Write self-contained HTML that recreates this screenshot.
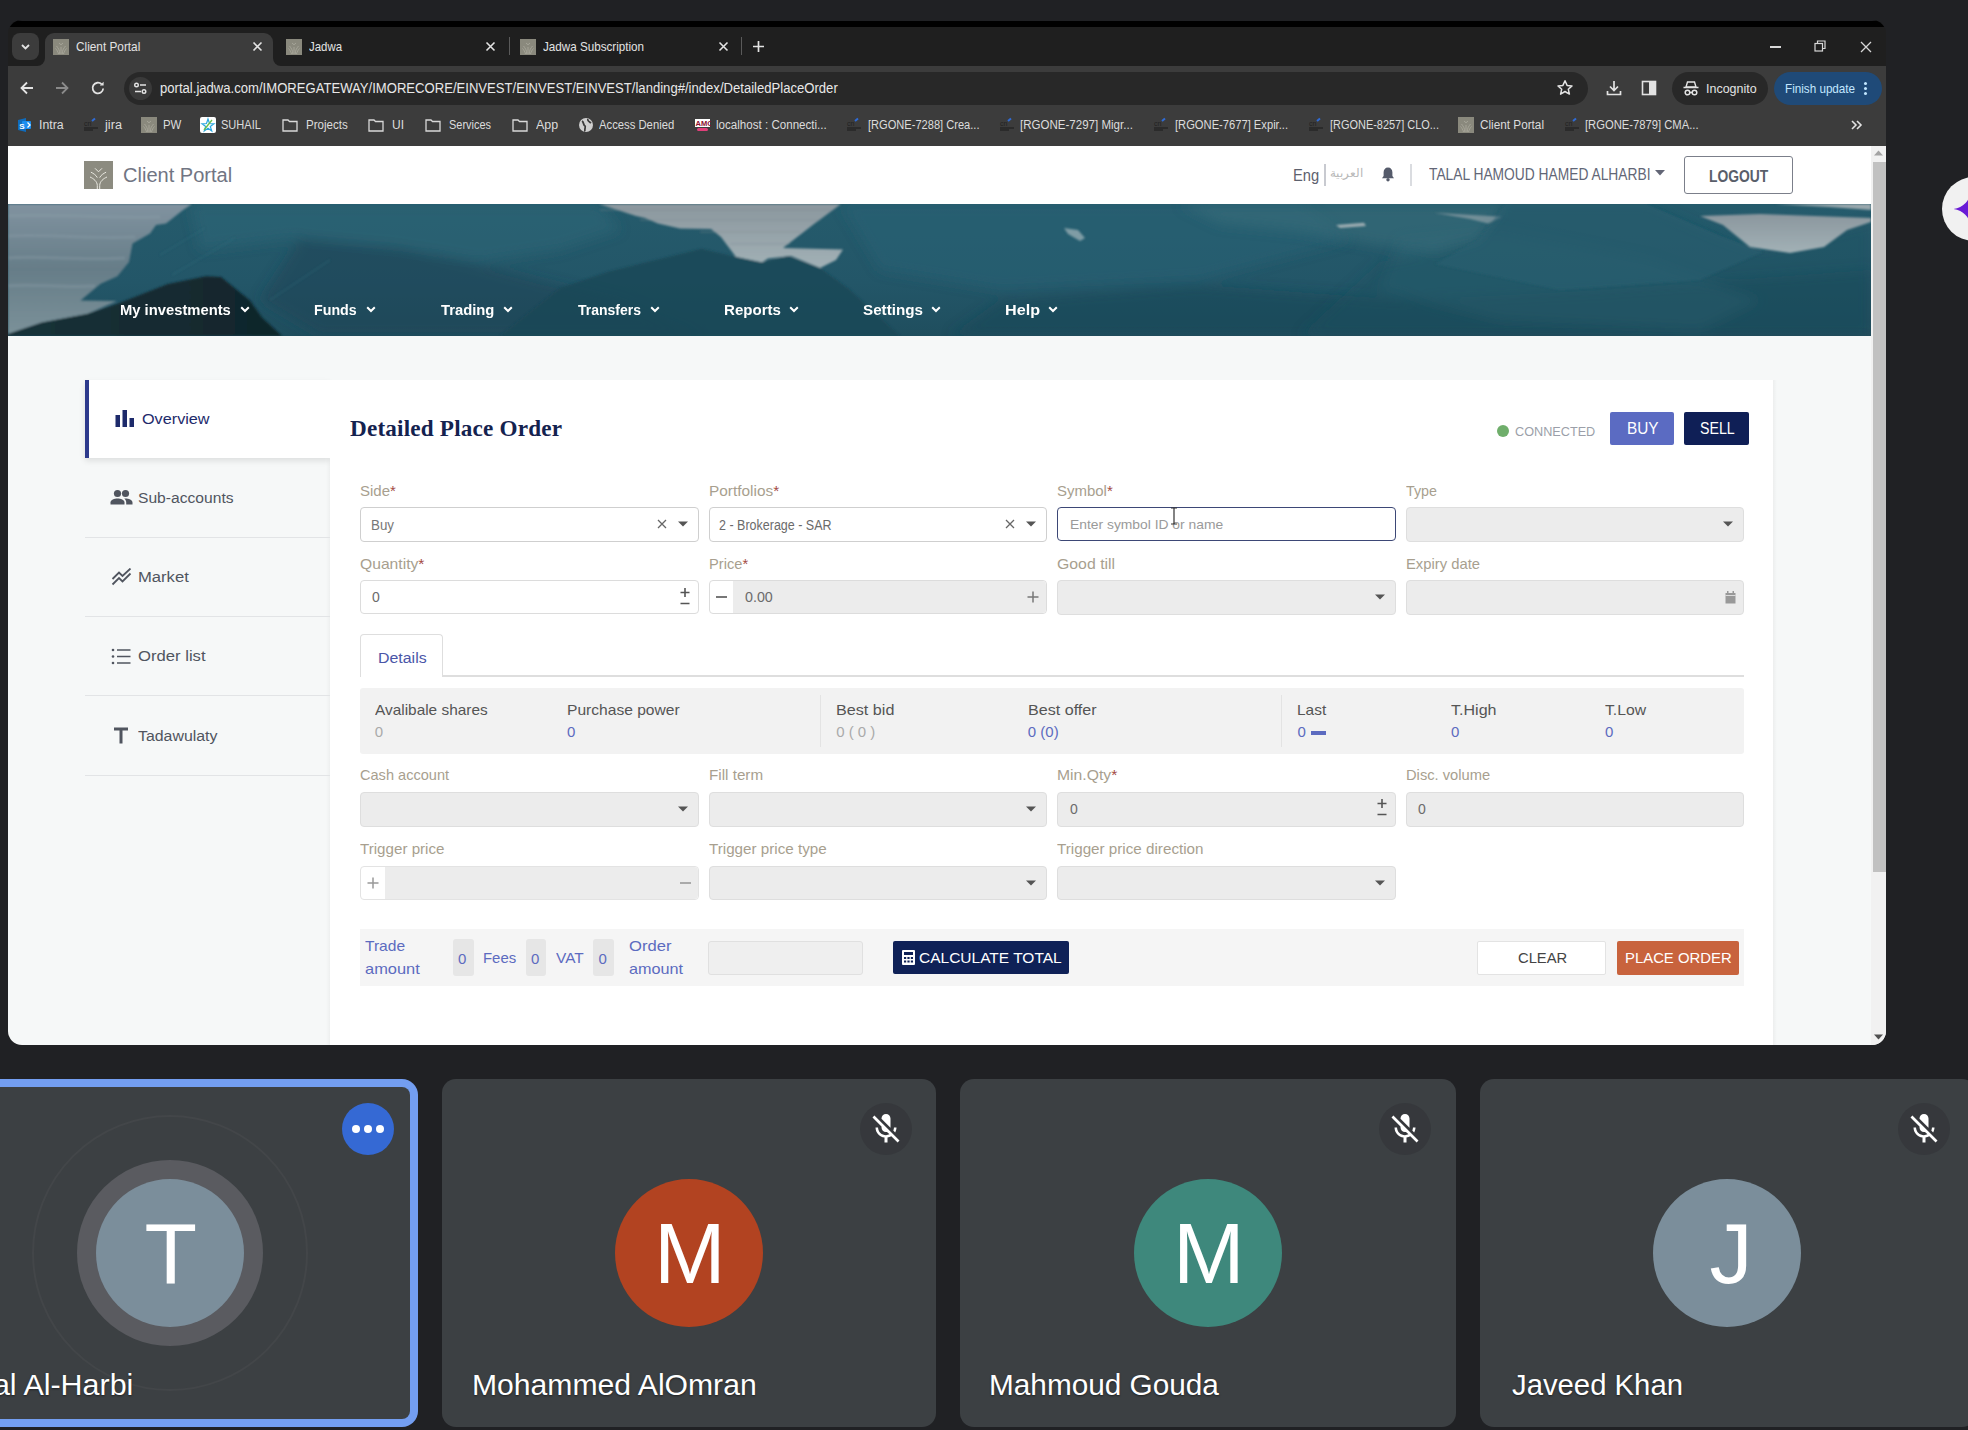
<!DOCTYPE html>
<html><head><meta charset="utf-8">
<style>
*{margin:0;padding:0;box-sizing:border-box}
html,body{width:1968px;height:1430px;overflow:hidden;background:#202124;font-family:"Liberation Sans",sans-serif}
.a{position:absolute}
.t{position:absolute;white-space:nowrap;line-height:1}
/* browser chrome */
#win{position:absolute;left:8px;top:20px;width:1878px;height:1025px;border-radius:14px;overflow:hidden;background:#1f1f1f}
.ct{color:#e3e3e3;font-size:13px}
.bk{color:#dcdcdc;font-size:12.5px}
.lb{position:absolute;white-space:nowrap;line-height:1;font-size:14.5px;color:#a89f8f}
.av{font-size:86px;color:#fff}
.nm{font-size:29px;color:#fff;text-shadow:0 1px 2px rgba(0,0,0,.5)}
.nv{font-size:15.5px;color:#fff;font-weight:bold}
.fav{position:absolute;width:16px;height:16px;background:#8b8879}
</style></head>
<body>
<div id="win">
  <div class="a" style="left:0;top:0;width:1878px;height:7px;background:#000;border-radius:14px 14px 0 0"></div><div class="a" style="left:0;top:0;width:1878px;height:1px;background:#202124"></div>
  <!-- tab strip -->
  <div class="a" style="left:4px;top:13px;width:27px;height:27px;border-radius:8px;background:#3c3c3c"></div>
  <svg class="a" style="left:11px;top:20px" width="13" height="13" viewBox="0 0 13 13"><path d="M3 5 L6.5 8.5 L10 5" stroke="#e3e3e3" stroke-width="1.8" fill="none"/></svg>
  <div class="a" style="left:37px;top:13px;width:228px;height:40px;border-radius:9px 9px 0 0;background:#3c3c3c"></div>
  <div class="a" style="left:29px;top:38px;width:8px;height:8px;background:#3c3c3c"></div><div class="a" style="left:29px;top:38px;width:8px;height:8px;background:#1f1f1f;border-bottom-right-radius:8px"></div>
  <div class="a" style="left:265px;top:38px;width:8px;height:8px;background:#3c3c3c"></div><div class="a" style="left:265px;top:38px;width:8px;height:8px;background:#1f1f1f;border-bottom-left-radius:8px"></div>
  <svg class="a" style="left:45px;top:19px" width="16" height="16" viewBox="0 0 16 16"><rect width="16" height="16" fill="#8a897d"/><path d="M8 15V8M6.8 15C6.8 11 5 9 3.5 7M9.2 15C9.2 11 11 9 12.5 7M5.5 15C5 12.5 3.5 10.5 2.5 9.5M10.5 15C11 12.5 12.5 10.5 13.5 9.5M6 4L8 5.8L10 4" stroke="#a9a89c" stroke-width="0.9" fill="none"/></svg>
  <div class="t ct" style="transform:scaleX(0.908);transform-origin:0 0;left:68px;top:20px">Client Portal</div>
  <svg class="a" style="left:244px;top:21px" width="11" height="11" viewBox="0 0 11 11"><path d="M1.5 1.5L9.5 9.5M9.5 1.5L1.5 9.5" stroke="#e3e3e3" stroke-width="1.6"/></svg>
  <svg class="a" style="left:278px;top:19px" width="16" height="16" viewBox="0 0 16 16"><rect width="16" height="16" fill="#8a897d"/><path d="M8 15V8M6.8 15C6.8 11 5 9 3.5 7M9.2 15C9.2 11 11 9 12.5 7M5.5 15C5 12.5 3.5 10.5 2.5 9.5M10.5 15C11 12.5 12.5 10.5 13.5 9.5M6 4L8 5.8L10 4" stroke="#a9a89c" stroke-width="0.9" fill="none"/></svg>
  <div class="t ct" style="transform:scaleX(0.878);transform-origin:0 0;left:301px;top:20px">Jadwa</div>
  <svg class="a" style="left:477px;top:21px" width="11" height="11" viewBox="0 0 11 11"><path d="M1.5 1.5L9.5 9.5M9.5 1.5L1.5 9.5" stroke="#e3e3e3" stroke-width="1.6"/></svg>
  <div class="a" style="left:501px;top:17px;width:1px;height:18px;background:#5a5a5a"></div>
  <svg class="a" style="left:512px;top:19px" width="16" height="16" viewBox="0 0 16 16"><rect width="16" height="16" fill="#8a897d"/><path d="M8 15V8M6.8 15C6.8 11 5 9 3.5 7M9.2 15C9.2 11 11 9 12.5 7M5.5 15C5 12.5 3.5 10.5 2.5 9.5M10.5 15C11 12.5 12.5 10.5 13.5 9.5M6 4L8 5.8L10 4" stroke="#a9a89c" stroke-width="0.9" fill="none"/></svg>
  <div class="t ct" style="transform:scaleX(0.896);transform-origin:0 0;left:535px;top:20px">Jadwa Subscription</div>
  <svg class="a" style="left:710px;top:21px" width="11" height="11" viewBox="0 0 11 11"><path d="M1.5 1.5L9.5 9.5M9.5 1.5L1.5 9.5" stroke="#e3e3e3" stroke-width="1.6"/></svg>
  <div class="a" style="left:733px;top:17px;width:1px;height:18px;background:#5a5a5a"></div>
  <svg class="a" style="left:744px;top:20px" width="13" height="13" viewBox="0 0 13 13"><path d="M6.5 1V12M1 6.5H12" stroke="#e3e3e3" stroke-width="1.7"/></svg>
  <!-- window controls -->
  <div class="a" style="left:1762px;top:26px;width:11px;height:1.5px;background:#d8d8d8"></div>
  <svg class="a" style="left:1806px;top:20px" width="12" height="12" viewBox="0 0 12 12"><rect x="1" y="3.5" width="7.5" height="7.5" fill="none" stroke="#d8d8d8" stroke-width="1.2"/><path d="M3.5 3.5V1H11V8.5H8.5" fill="none" stroke="#d8d8d8" stroke-width="1.2"/></svg>
  <svg class="a" style="left:1852px;top:21px" width="12" height="12" viewBox="0 0 12 12"><path d="M1 1L11 11M11 1L1 11" stroke="#d8d8d8" stroke-width="1.3"/></svg>

  <!-- toolbar -->
  <div class="a" style="left:0;top:46px;width:1878px;height:80px;background:#3c3c3c"></div>
  <svg class="a" style="left:11px;top:60px" width="16" height="16" viewBox="0 0 16 16"><path d="M14 8H2.5M8 2.5L2.5 8L8 13.5" stroke="#e3e3e3" stroke-width="1.8" fill="none"/></svg>
  <svg class="a" style="left:46px;top:60px" width="16" height="16" viewBox="0 0 16 16"><path d="M2 8H13.5M8 2.5L13.5 8L8 13.5" stroke="#8a8a8a" stroke-width="1.8" fill="none"/></svg>
  <svg class="a" style="left:82px;top:60px" width="16" height="16" viewBox="0 0 16 16"><path d="M13.2 8.5A5.3 5.3 0 1 1 11.6 4.2" stroke="#e3e3e3" stroke-width="1.8" fill="none"/><path d="M13.6 1.8V5.6H9.8Z" fill="#e3e3e3"/></svg>
  <div class="a" style="left:116px;top:52px;width:1464px;height:33px;border-radius:17px;background:#282828"></div>
  <div class="a" style="left:121px;top:57px;width:23px;height:23px;border-radius:12px;background:#3a3a3a"></div>
  <svg class="a" style="left:124px;top:60px" width="17" height="17" viewBox="0 0 17 17"><circle cx="4.5" cy="5" r="1.8" fill="none" stroke="#e3e3e3" stroke-width="1.4"/><path d="M8 5H14" stroke="#e3e3e3" stroke-width="1.6"/><circle cx="12" cy="11.5" r="1.8" fill="none" stroke="#e3e3e3" stroke-width="1.4"/><path d="M3 11.5H9" stroke="#e3e3e3" stroke-width="1.6"/></svg>
  <div class="t" style="transform:scaleX(0.935);transform-origin:0 0;left:152px;top:61px;color:#e8e8e8;font-size:14px" id="url">portal.jadwa.com/IMOREGATEWAY/IMORECORE/EINVEST/EINVEST/EINVEST/landing#/index/DetailedPlaceOrder</div>
  <svg class="a" style="left:1548px;top:59px" width="18" height="18" viewBox="0 0 18 18"><path d="M9 1.8L11.1 6.4L16 6.9L12.3 10.2L13.4 15.1L9 12.5L4.6 15.1L5.7 10.2L2 6.9L6.9 6.4Z" fill="none" stroke="#e3e3e3" stroke-width="1.5" stroke-linejoin="round"/></svg>
  <svg class="a" style="left:1597px;top:59px" width="18" height="18" viewBox="0 0 18 18"><path d="M9 2V11M5 7.5L9 11.5L13 7.5M2.5 12V15.5H15.5V12" stroke="#e3e3e3" stroke-width="1.7" fill="none"/></svg>
  <svg class="a" style="left:1633px;top:60px" width="16" height="16" viewBox="0 0 16 16"><rect x="1.5" y="1.5" width="13" height="13" fill="none" stroke="#e3e3e3" stroke-width="1.6"/><rect x="8" y="1.5" width="6.5" height="13" fill="#e3e3e3"/></svg>
  <div class="a" style="left:1664px;top:52px;width:96px;height:33px;border-radius:17px;background:#282828"></div>
  <svg class="a" style="left:1674px;top:60px" width="18" height="18" viewBox="0 0 18 18"><path d="M4 7L5.5 2H12.5L14 7Z" fill="none" stroke="#e3e3e3" stroke-width="1.4"/><path d="M1.5 7.5H16.5" stroke="#e3e3e3" stroke-width="1.6"/><circle cx="5.5" cy="12.5" r="2.3" fill="none" stroke="#e3e3e3" stroke-width="1.5"/><circle cx="12.5" cy="12.5" r="2.3" fill="none" stroke="#e3e3e3" stroke-width="1.5"/><path d="M7.8 12.5H10.2" stroke="#e3e3e3" stroke-width="1.3"/></svg>
  <div class="t" style="transform:scaleX(0.959);transform-origin:0 0;left:1698px;top:62px;color:#e3e3e3;font-size:13px">Incognito</div>
  <div class="a" style="left:1766px;top:52px;width:108px;height:33px;border-radius:17px;background:#1f4a78"></div>
  <div class="t" style="transform:scaleX(0.898);transform-origin:0 0;left:1777px;top:62px;color:#c2e7ff;font-size:13px">Finish update</div>
  <div class="a" style="left:1856px;top:62px;width:3px;height:3px;border-radius:2px;background:#c2e7ff"></div>
  <div class="a" style="left:1856px;top:67px;width:3px;height:3px;border-radius:2px;background:#c2e7ff"></div>
  <div class="a" style="left:1856px;top:72px;width:3px;height:3px;border-radius:2px;background:#c2e7ff"></div>

  <!-- bookmarks -->
  
  <!-- bookmarks (internal coords) -->
  <svg class="a" style="left:9px;top:97px" width="16" height="16" viewBox="0 0 16 16"><path d="M1 3L9 1V15L1 13Z" fill="#0f6cbd"/><rect x="5" y="4" width="9" height="8" rx="1" fill="#1b8ff0"/><text x="2.2" y="11.5" font-size="8" font-weight="bold" fill="#fff" font-family="Liberation Sans">S</text><path d="M10.5 5.5L13 8L10.5 10.5" stroke="#fff" stroke-width="1.3" fill="none"/></svg>
  <div class="t bk" style="transform:scaleX(0.983);transform-origin:0 0;left:31px;top:99px">Intra</div>
  <svg class="a jr" style="left:75px;top:97px" width="16" height="16" viewBox="0 0 16 16"><text x="1" y="9" font-size="7" fill="#222" font-family="Liberation Sans">cn</text><path d="M9 4L12 1.5" stroke="#2f6bd6" stroke-width="2"/><path d="M1 11H15M1 13H10" stroke="#1a1a1a" stroke-width="1"/></svg>
  <div class="t bk" style="transform:scaleX(1.020);transform-origin:0 0;left:97px;top:99px">jira</div>
  <svg class="a" style="left:133px;top:97px" width="16" height="16" viewBox="0 0 16 16"><rect width="16" height="16" fill="#8a897d"/><path d="M8 15V8M6.8 15C6.8 11 5 9 3.5 7M9.2 15C9.2 11 11 9 12.5 7M5.5 15C5 12.5 3.5 10.5 2.5 9.5M10.5 15C11 12.5 12.5 10.5 13.5 9.5M6 4L8 5.8L10 4" stroke="#a9a89c" stroke-width="0.9" fill="none"/></svg>
  <div class="t bk" style="transform:scaleX(0.914);transform-origin:0 0;left:155px;top:99px">PW</div>
  <svg class="a" style="left:192px;top:97px" width="16" height="16" viewBox="0 0 16 16"><rect width="16" height="16" rx="2" fill="#fff"/><path d="M8 2L9.5 6.5L14 6.8L10.3 9.5L11.7 14L8 11.2L4.3 14L5.7 9.5L2 6.8L6.5 6.5Z" fill="none" stroke="#2da8e0" stroke-width="1.2"/><path d="M4 13L12 3" stroke="#6cc04a" stroke-width="1.3"/></svg>
  <div class="t bk" style="transform:scaleX(0.884);transform-origin:0 0;left:213px;top:99px">SUHAIL</div>
  <svg class="a fd" style="left:274px;top:98px" width="16" height="14" viewBox="0 0 16 14"><path d="M1 2H6L7.5 3.5H15V13H1Z" fill="none" stroke="#d8d8d8" stroke-width="1.3"/></svg>
  <div class="t bk" style="transform:scaleX(0.926);transform-origin:0 0;left:298px;top:99px">Projects</div>
  <svg class="a" style="left:360px;top:98px" width="16" height="14" viewBox="0 0 16 14"><path d="M1 2H6L7.5 3.5H15V13H1Z" fill="none" stroke="#d8d8d8" stroke-width="1.3"/></svg>
  <div class="t bk" style="transform:scaleX(0.960);transform-origin:0 0;left:384px;top:99px">UI</div>
  <svg class="a" style="left:417px;top:98px" width="16" height="14" viewBox="0 0 16 14"><path d="M1 2H6L7.5 3.5H15V13H1Z" fill="none" stroke="#d8d8d8" stroke-width="1.3"/></svg>
  <div class="t bk" style="transform:scaleX(0.876);transform-origin:0 0;left:441px;top:99px">Services</div>
  <svg class="a" style="left:504px;top:98px" width="16" height="14" viewBox="0 0 16 14"><path d="M1 2H6L7.5 3.5H15V13H1Z" fill="none" stroke="#d8d8d8" stroke-width="1.3"/></svg>
  <div class="t bk" style="transform:scaleX(0.993);transform-origin:0 0;left:528px;top:99px">App</div>
  <svg class="a" style="left:570px;top:97px" width="16" height="16" viewBox="0 0 16 16"><circle cx="8" cy="8" r="7" fill="#cfcfcf"/><path d="M4 4C6 5 5 8 7 9C8 10 6 13 7 14.5M10 2C9 4 12 5 13 6" stroke="#3c3c3c" stroke-width="1.8" fill="none"/></svg>
  <div class="t bk" style="transform:scaleX(0.902);transform-origin:0 0;left:591px;top:99px">Access Denied</div>
  <svg class="a" style="left:686px;top:97px" width="17" height="16" viewBox="0 0 17 16"><rect x="1" y="2" width="15" height="8" fill="#fff"/><text x="1.5" y="9" font-size="7.5" font-weight="bold" fill="#8a1030" font-family="Liberation Sans">AMO</text><rect x="3" y="11" width="11" height="3" rx="1.5" fill="#e0407a"/></svg>
  <div class="t bk" style="transform:scaleX(0.927);transform-origin:0 0;left:708px;top:99px">localhost : Connecti...</div>
  <svg class="a" style="left:838px;top:97px" width="16" height="16" viewBox="0 0 16 16"><text x="1" y="9" font-size="7" fill="#222" font-family="Liberation Sans">cn</text><path d="M9 4L12 1.5" stroke="#2f6bd6" stroke-width="2"/><path d="M1 11H15M1 13H10" stroke="#1a1a1a" stroke-width="1"/></svg>
  <div class="t bk" style="transform:scaleX(0.887);transform-origin:0 0;left:860px;top:99px">[RGONE-7288] Crea...</div>
  <svg class="a" style="left:991px;top:97px" width="16" height="16" viewBox="0 0 16 16"><text x="1" y="9" font-size="7" fill="#222" font-family="Liberation Sans">cn</text><path d="M9 4L12 1.5" stroke="#2f6bd6" stroke-width="2"/><path d="M1 11H15M1 13H10" stroke="#1a1a1a" stroke-width="1"/></svg>
  <div class="t bk" style="transform:scaleX(0.923);transform-origin:0 0;left:1012px;top:99px">[RGONE-7297] Migr...</div>
  <svg class="a" style="left:1145px;top:97px" width="16" height="16" viewBox="0 0 16 16"><text x="1" y="9" font-size="7" fill="#222" font-family="Liberation Sans">cn</text><path d="M9 4L12 1.5" stroke="#2f6bd6" stroke-width="2"/><path d="M1 11H15M1 13H10" stroke="#1a1a1a" stroke-width="1"/></svg>
  <div class="t bk" style="transform:scaleX(0.894);transform-origin:0 0;left:1167px;top:99px">[RGONE-7677] Expir...</div>
  <svg class="a" style="left:1300px;top:97px" width="16" height="16" viewBox="0 0 16 16"><text x="1" y="9" font-size="7" fill="#222" font-family="Liberation Sans">cn</text><path d="M9 4L12 1.5" stroke="#2f6bd6" stroke-width="2"/><path d="M1 11H15M1 13H10" stroke="#1a1a1a" stroke-width="1"/></svg>
  <div class="t bk" style="transform:scaleX(0.876);transform-origin:0 0;left:1322px;top:99px">[RGONE-8257] CLO...</div>
  <svg class="a" style="left:1450px;top:97px" width="16" height="16" viewBox="0 0 16 16"><rect width="16" height="16" fill="#8a897d"/><path d="M8 15V8M6.8 15C6.8 11 5 9 3.5 7M9.2 15C9.2 11 11 9 12.5 7M5.5 15C5 12.5 3.5 10.5 2.5 9.5M10.5 15C11 12.5 12.5 10.5 13.5 9.5M6 4L8 5.8L10 4" stroke="#a9a89c" stroke-width="0.9" fill="none"/></svg>
  <div class="t bk" style="transform:scaleX(0.940);transform-origin:0 0;left:1472px;top:99px">Client Portal</div>
  <svg class="a" style="left:1556px;top:97px" width="16" height="16" viewBox="0 0 16 16"><text x="1" y="9" font-size="7" fill="#222" font-family="Liberation Sans">cn</text><path d="M9 4L12 1.5" stroke="#2f6bd6" stroke-width="2"/><path d="M1 11H15M1 13H10" stroke="#1a1a1a" stroke-width="1"/></svg>
  <div class="t bk" style="transform:scaleX(0.898);transform-origin:0 0;left:1577px;top:99px">[RGONE-7879] CMA...</div>
  <svg class="a" style="left:1842px;top:99px" width="13" height="12" viewBox="0 0 13 12"><path d="M2 2L6 6L2 10M7 2L11 6L7 10" stroke="#e3e3e3" stroke-width="1.6" fill="none"/></svg>

</div>

<div id="page" class="a" style="left:8px;top:146px;width:1878px;height:899px;overflow:hidden;border-radius:0 0 14px 14px;background:#f6f8f8">
<div class="a" style="left:-8px;top:-146px;width:1968px;height:1430px">
  <!-- header -->
  <div class="a" style="left:8px;top:146px;width:1863px;height:58px;background:#fff"></div>
  <svg class="a" style="left:84px;top:161px" width="29" height="28" viewBox="0 0 29 28"><rect width="29" height="28" fill="#8c8b80"/><path d="M11 7.3L14.5 10.8L18 7.3M6.9 11.2C9.5 12.5 12 14 13.3 16.6M22.1 11.2C19.5 12.5 17 14 15.7 16.6M6 16C9.5 17.5 13.3 20.5 13.3 24.5V28M23 16C19.5 17.5 15.7 20.5 15.7 24.5V28" stroke="#e9e8e0" stroke-width="1" fill="none"/></svg>
  <div class="t" id="cp" style="transform:scaleX(1.028);transform-origin:0 0;left:123px;top:166.3px;font-size:19.5px;color:#717583">Client Portal</div>
  <div class="t" id="eng" style="transform:scaleX(0.892);transform-origin:0 0;left:1293px;top:166.5px;font-size:16.5px;color:#5d616e">Eng</div>
  <div class="a" style="left:1324px;top:164px;width:2px;height:22px;background:#c8cad0"></div>
  <div class="t" style="left:1330px;top:167px;font-size:12px;color:#b9b9b9">العربية</div>
  <svg class="a" style="left:1381px;top:166px" width="14" height="16" viewBox="0 0 14 16"><path d="M7 1.5C4.2 1.5 2.6 3.6 2.6 6.3V10L1 12.2H13L11.4 10V6.3C11.4 3.6 9.8 1.5 7 1.5Z" fill="#555b6b"/><circle cx="7" cy="13.8" r="1.7" fill="#555b6b"/></svg>
  <div class="a" style="left:1410px;top:164px;width:2px;height:22px;background:#dadce0"></div>
  <div class="t" id="talal" style="transform:scaleX(0.862);transform-origin:0 0;left:1429px;top:166.5px;font-size:16px;color:#626676">TALAL HAMOUD HAMED ALHARBI</div>
  <svg class="a" style="left:1655px;top:170px" width="10" height="6" viewBox="0 0 10 6"><path d="M0 0H10L5 5.5Z" fill="#626676"/></svg>
  <div class="a" style="left:1684px;top:156px;width:109px;height:38px;border:1px solid #7b7f8a;border-radius:3px;background:#fff"></div>
  <div class="t" id="logout" style="transform:scaleX(0.840);transform-origin:0 0;left:1709px;top:167.5px;font-size:16.5px;color:#595e6a;font-weight:bold">LOGOUT</div>

  <!-- banner -->
  <div class="a" id="banner" style="left:8px;top:204px;width:1863px;height:132px;overflow:hidden;background:#2b5768"><svg width="1863" height="132" viewBox="0 0 1863 132" style="position:absolute;left:0;top:0">
<defs>
<linearGradient id="g1" x1="0" y1="0" x2="0" y2="1"><stop offset="0" stop-color="#255b6c"/><stop offset="0.6" stop-color="#235668"/><stop offset="1" stop-color="#1f4e5e"/></linearGradient>
<linearGradient id="mist" x1="0" y1="0" x2="0" y2="1"><stop offset="0" stop-color="#8193a0"/><stop offset="0.5" stop-color="#667d88"/><stop offset="1" stop-color="#7b9199"/></linearGradient>
<linearGradient id="mist2" x1="0" y1="0" x2="0" y2="1"><stop offset="0" stop-color="#8b979e"/><stop offset="1" stop-color="#a2b1b6"/></linearGradient>
<linearGradient id="fg" x1="0" y1="0" x2="1" y2="0"><stop offset="0" stop-color="#1a3239"/><stop offset="1" stop-color="#10252b"/></linearGradient>
<filter id="bl"><feGaussianBlur stdDeviation="1.0"/></filter>
<filter id="bl2"><feGaussianBlur stdDeviation="6"/></filter>
</defs>
<rect width="1863" height="132" fill="url(#g1)"/>
<g filter="url(#bl2)">
<polygon points="182.0,0.0 592.0,0.0 612.0,26.0 552.0,46.0 472.0,58.0 392.0,44.0 292.0,34.0 192.0,46.0" fill="#2c6577" opacity="0.6"/>
<polygon points="833.0,0.0 1292.0,0.0 1342.0,36.0 1192.0,76.0 992.0,86.0 872.0,66.0" fill="#2b6374" opacity="0.55"/>
<polygon points="292.0,34.0 396.0,45.0 471.0,60.0 535.0,77.0 612.0,96.0 692.0,132.0 312.0,132.0 252.0,96.0" fill="#1b4555" opacity="0.55"/>
<polygon points="992.0,96.0 1192.0,81.0 1392.0,96.0 1592.0,86.0 1863.0,66.0 1863.0,132.0 942.0,132.0" fill="#1b4656" opacity="0.5"/>
<polygon points="1392.0,36.0 1492.0,26.0 1642.0,56.0 1752.0,96.0 1692.0,126.0 1492.0,116.0 1372.0,86.0" fill="#2a6273" opacity="0.5"/>
</g>
<g filter="url(#bl2)"><polygon points="1172.0,0.0 1497.0,0.0 1470.0,36.0 1427.0,48.0 1372.0,42.0 1292.0,28.0 1212.0,20.0" fill="#3a6e7c" opacity="0.55"/>
<polygon points="1372.0,58.0 1427.0,48.0 1470.0,36.0 1497.0,0.0 1638.0,0.0 1715.0,33.0 1755.0,48.0 1792.0,36.0 1863.0,18.0 1863.0,132.0 1292.0,132.0" fill="#214f5f" opacity="0.35"/></g>
<g filter="url(#bl)">
<polygon points="0.0,0.0 184.0,0.0 175.0,6.0 158.0,19.5 148.0,21.0 142.0,29.5 124.5,39.6 121.0,58.0 109.4,72.3 92.6,79.8 72.5,96.6 109.0,97.0 79.0,110.0 34.0,118.4 0.0,130.0" fill="url(#mist)"/>
<path d="M8 216C60 214 100 218 160 217M8 236C50 234 90 239 135 237M8 258C40 255 80 261 125 258M8 286C30 283 60 288 95 286" stroke="#8ea1a8" stroke-width="3" fill="none" opacity="0.35" transform="translate(-8,-204)"/>
<polygon points="591.0,0.0 833.0,0.0 806.0,20.0 775.0,44.0 835.0,45.6 828.0,56.0 812.0,64.0 783.0,52.0 760.0,54.5 754.0,58.6 728.0,53.0 713.0,33.0 703.0,25.0 672.0,24.5 650.0,19.6 637.0,14.0 628.0,12.0" fill="url(#mist2)"/><path d="M600 210H830M640 220H820M700 232H800M730 244H790" stroke="#7d8b91" stroke-width="1.5" opacity="0.35" transform="translate(-8,-204)"/>
<polygon points="492.0,132.0 552.0,84.0 601.0,67.5 693.5,44.8 728.0,53.0 754.0,58.6 780.0,52.0 812.0,64.0 841.0,85.0 892.0,132.0" fill="#1d4756" opacity="0.8"/>
<polygon points="1328.0,21.0 1356.0,18.8 1358.0,22.0 1332.0,24.0" fill="#9eadb2"/>
<polygon points="1426.0,8.7 1494.0,12.8 1480.0,19.5 1462.0,15.0" fill="#8ea0a6" opacity="0.7"/>
<polygon points="1056.0,24.0 1070.0,26.0 1077.0,34.0 1072.0,37.0 1060.0,30.0" fill="#7f9ca5"/>
<polygon points="1692.0,12.0 1752.0,10.0 1863.0,14.0 1863.0,18.0 1839.0,26.0 1816.0,43.0 1782.0,49.0 1742.0,43.0 1715.0,21.0" fill="url(#mist2)"/>
<polygon points="1767.0,0.0 1863.0,0.0 1863.0,6.0 1822.0,3.0" fill="#9aa8ad"/>
<polygon points="1427.0,60.0 1470.0,36.0 1497.0,0.0 1638.0,0.0 1715.0,33.0 1755.0,48.0 1692.0,76.0 1552.0,86.0" fill="#2b6273" opacity="0.45"/>
<polygon points="0.0,130.0 34.0,118.4 79.0,110.0 109.0,100.0 160.0,80.0 198.0,72.3 213.0,73.0 242.0,96.6 254.0,113.4 274.0,132.0 0.0,132.0" fill="url(#fg)"/>
<path d="M160 255L205 228M172 275L235 238M270 300L330 260" stroke="#3e7383" stroke-width="2" opacity="0.25" transform="translate(-8,-204)"/>
</g>
</svg><div class="t nv" style="transform:scaleX(0.953);transform-origin:0 0;left:111.8px;top:98.4px">My investments</div>
<svg class="a" style="left:231.8px;top:101.5px" width="10" height="7" viewBox="0 0 10 7"><path d="M1.2 1.2L5 5L8.8 1.2" stroke="#fff" stroke-width="2" fill="none"/></svg>
<div class="t nv" style="transform:scaleX(0.918);transform-origin:0 0;left:306.3px;top:98.4px">Funds</div>
<svg class="a" style="left:358.0px;top:101.5px" width="10" height="7" viewBox="0 0 10 7"><path d="M1.2 1.2L5 5L8.8 1.2" stroke="#fff" stroke-width="2" fill="none"/></svg>
<div class="t nv" style="transform:scaleX(0.954);transform-origin:0 0;left:432.9px;top:98.4px">Trading</div>
<svg class="a" style="left:495.0px;top:101.5px" width="10" height="7" viewBox="0 0 10 7"><path d="M1.2 1.2L5 5L8.8 1.2" stroke="#fff" stroke-width="2" fill="none"/></svg>
<div class="t nv" style="transform:scaleX(0.903);transform-origin:0 0;left:570.0px;top:98.4px">Transfers</div>
<svg class="a" style="left:642.0px;top:101.5px" width="10" height="7" viewBox="0 0 10 7"><path d="M1.2 1.2L5 5L8.8 1.2" stroke="#fff" stroke-width="2" fill="none"/></svg>
<div class="t nv" style="transform:scaleX(0.973);transform-origin:0 0;left:716.0px;top:98.4px">Reports</div>
<svg class="a" style="left:781.0px;top:101.5px" width="10" height="7" viewBox="0 0 10 7"><path d="M1.2 1.2L5 5L8.8 1.2" stroke="#fff" stroke-width="2" fill="none"/></svg>
<div class="t nv" style="transform:scaleX(0.981);transform-origin:0 0;left:855.0px;top:98.4px">Settings</div>
<svg class="a" style="left:923.0px;top:101.5px" width="10" height="7" viewBox="0 0 10 7"><path d="M1.2 1.2L5 5L8.8 1.2" stroke="#fff" stroke-width="2" fill="none"/></svg>
<div class="t nv" style="transform:scaleX(1.042);transform-origin:0 0;left:997.0px;top:98.4px">Help</div>
<svg class="a" style="left:1040.0px;top:101.5px" width="10" height="7" viewBox="0 0 10 7"><path d="M1.2 1.2L5 5L8.8 1.2" stroke="#fff" stroke-width="2" fill="none"/></svg>
</div>

  <!-- scrollbar -->
  <div class="a" style="left:1871px;top:146px;width:15px;height:899px;background:#f1f1f1"></div>
  <div class="a" style="left:1873px;top:162px;width:13px;height:710px;background:#c1c1c1"></div>
  <svg class="a" style="left:1874px;top:150px" width="9" height="6" viewBox="0 0 9 6"><path d="M0 5.5L4.5 0.5L9 5.5Z" fill="#a3a3a3"/></svg>
  <svg class="a" style="left:1874px;top:1034px" width="9" height="6" viewBox="0 0 9 6"><path d="M0 0.5L4.5 5.5L9 0.5Z" fill="#505050"/></svg>

  <!-- sidebar -->
  <div class="a" style="left:85px;top:458px;width:245px;height:587px;background:#f6f8f8"></div><div class="a" style="left:326px;top:458px;width:4px;height:587px;background:linear-gradient(90deg,rgba(0,0,0,0),rgba(0,0,0,0.035))"></div>
  <div class="a" style="left:85px;top:380px;width:245px;height:78px;background:#fff;box-shadow:0 3px 6px rgba(0,0,0,0.10)"></div>
  <div class="a" style="left:85px;top:380px;width:4px;height:78px;background:#2d3a8c"></div>
  <div class="a" style="left:85px;top:537px;width:245px;height:1px;background:#e2e4e6"></div>
  <div class="a" style="left:85px;top:616px;width:245px;height:1px;background:#e2e4e6"></div>
  <div class="a" style="left:85px;top:695px;width:245px;height:1px;background:#e2e4e6"></div>
  <div class="a" style="left:85px;top:775px;width:245px;height:1px;background:#e2e4e6"></div>
  <svg class="a" style="left:115px;top:410px" width="21" height="17" viewBox="0 0 21 17"><rect x="0.5" y="5" width="4.5" height="12" fill="#1d2a6b"/><rect x="7.5" y="0" width="4.5" height="17" fill="#1d2a6b"/><rect x="14.5" y="8" width="4.5" height="9" fill="#1d2a6b"/></svg>
  <div class="t" id="ov" style="transform:scaleX(1.046);transform-origin:0 0;left:142px;top:411px;font-size:15.5px;color:#1d2a6b">Overview</div>
  <svg class="a" style="left:110px;top:489px" width="23" height="16" viewBox="0 0 23 16"><circle cx="15.5" cy="4.5" r="3.6" fill="#50555f"/><circle cx="7.5" cy="4.5" r="3.6" fill="#50555f"/><path d="M0.5 15.5V13.5C0.5 10.8 4.5 9.5 7.5 9.5C10.5 9.5 14.5 10.8 14.5 13.5V15.5Z" fill="#50555f"/><path d="M15.5 9.5C18.5 9.5 22.5 10.8 22.5 13.5V15.5H16.2V13.5C16.2 11.8 15.4 10.5 14.2 9.6Z" fill="#50555f"/></svg>
  <div class="t" id="sub" style="transform:scaleX(1.008);transform-origin:0 0;left:138px;top:490px;font-size:15.5px;color:#50555f">Sub-accounts</div>
  <svg class="a" style="left:111px;top:568px" width="21" height="18" viewBox="0 0 21 18"><path d="M1.5 16.5L8 10L11.5 13.5L19.5 5.5M1.5 11L8 4.5L11.5 8L19.5 0.5" stroke="#50555f" stroke-width="1.8" fill="none"/></svg>
  <div class="t" id="mkt" style="transform:scaleX(1.072);transform-origin:0 0;left:138px;top:569px;font-size:15.5px;color:#50555f">Market</div>
  <svg class="a" style="left:111px;top:648px" width="20" height="17" viewBox="0 0 20 17"><circle cx="2" cy="2" r="1.3" fill="#50555f"/><circle cx="2" cy="8.5" r="1.3" fill="#50555f"/><circle cx="2" cy="15" r="1.3" fill="#50555f"/><path d="M6 2H19.5M6 8.5H19.5M6 15H19.5" stroke="#50555f" stroke-width="1.7"/></svg>
  <div class="t" id="ol" style="transform:scaleX(1.074);transform-origin:0 0;left:138px;top:648px;font-size:15.5px;color:#50555f">Order list</div>
  <svg class="a" style="left:113px;top:727px" width="16" height="17" viewBox="0 0 16 17"><path d="M1 2H15M8 2V16.5" stroke="#50555f" stroke-width="3"/></svg>
  <div class="t" id="tad" style="transform:scaleX(1.024);transform-origin:0 0;left:138px;top:728px;font-size:15.5px;color:#50555f">Tadawulaty</div>

  <!-- main panel -->
  <div class="a" style="left:330px;top:380px;width:1443px;height:665px;background:#fff"></div><div class="a" style="left:1773px;top:380px;width:4px;height:665px;background:linear-gradient(90deg,rgba(0,0,0,0.04),rgba(0,0,0,0))"></div>
  <div id="main">
<div class="t" id="title" style="transform:scaleX(0.965);transform-origin:0 0;left:350px;top:415.7px;font-size:24px;color:#14224f;font-family:'Liberation Serif',serif;font-weight:bold;letter-spacing:0.2px">Detailed Place Order</div>
<div class="a" style="left:1497px;top:425px;width:12px;height:12px;border-radius:6px;background:#6fae6b"></div>
<div class="t" id="conn" style="transform:scaleX(1.014);transform-origin:0 0;left:1515px;top:426.0px;font-size:12.5px;color:#9b9fa9;">CONNECTED</div>
<div class="a" style="left:1610px;top:412px;width:64px;height:33px;background:#5b6bc2;border-radius:2px"></div>
<div class="t" id="buy" style="transform:scaleX(0.960);transform-origin:0 0;left:1627px;top:420.5px;font-size:16px;color:#fff;">BUY</div>
<div class="a" style="left:1684px;top:412px;width:65px;height:33px;background:#0f1f56;border-radius:2px"></div>
<div class="t" id="sell" style="transform:scaleX(0.887);transform-origin:0 0;left:1700px;top:420.5px;font-size:16px;color:#fff;">SELL</div>
<div class="t lb" style="transform:scaleX(1.035);transform-origin:0 0;left:360px;top:483.7px">Side<span style="color:#a44b43">*</span></div>
<div class="t lb" style="transform:scaleX(1.062);transform-origin:0 0;left:708.6px;top:483.7px">Portfolios<span style="color:#a44b43">*</span></div>
<div class="t lb" style="transform:scaleX(1.033);transform-origin:0 0;left:1057px;top:483.7px">Symbol<span style="color:#a44b43">*</span></div>
<div class="t lb" style="transform:scaleX(0.986);transform-origin:0 0;left:1405.5px;top:483.7px">Type</div>
<div class="a" style="left:360px;top:507px;width:338.5px;height:35px;background:#fff;border:1px solid #cfcfcf;border-radius:4px;"></div>
<div class="t" style="transform:scaleX(0.953);transform-origin:0 0;left:371px;top:518.1px;font-size:14px;color:#777;">Buy</div>
<svg class="a" style="left:657px;top:519px" width="10" height="10" viewBox="0 0 10 10"><path d="M1 1L9 9M9 1L1 9" stroke="#666" stroke-width="1.3"/></svg>
<svg class="a" style="left:678px;top:521px" width="10" height="6" viewBox="0 0 10 6"><path d="M0 0.5H10L5 5.5Z" fill="#555"/></svg>
<div class="a" style="left:708.6px;top:507px;width:338.5px;height:35px;background:#fff;border:1px solid #cfcfcf;border-radius:4px;"></div>
<div class="t" id="brok" style="transform:scaleX(0.893);transform-origin:0 0;left:719px;top:518.1px;font-size:14px;color:#6b6b6b;">2 - Brokerage - SAR</div>
<svg class="a" style="left:1005px;top:519px" width="10" height="10" viewBox="0 0 10 10"><path d="M1 1L9 9M9 1L1 9" stroke="#666" stroke-width="1.3"/></svg>
<svg class="a" style="left:1026px;top:521px" width="10" height="6" viewBox="0 0 10 6"><path d="M0 0.5H10L5 5.5Z" fill="#555"/></svg>
<div class="a" style="left:1057px;top:507px;width:338.5px;height:34px;background:#fff;border:1px solid #3d4876;border-radius:4px;border-width:1.5px"></div>
<div class="t" id="ph" style="transform:scaleX(1.026);transform-origin:0 0;left:1070px;top:517.6px;font-size:13.5px;color:#9a9a9a;">Enter symbol ID or name</div>
<svg class="a" style="left:1170px;top:507px" width="8" height="18" viewBox="0 0 8 18"><path d="M1 1H7M4 1V17M1 17H7" stroke="#333" stroke-width="1.2"/></svg>
<div class="a" style="left:1405.5px;top:507px;width:338.5px;height:35px;background:#ececec;border:1px solid #dedede;border-radius:4px;"></div>
<svg class="a" style="left:1723px;top:521px" width="10" height="6" viewBox="0 0 10 6"><path d="M0 0.5H10L5 5.5Z" fill="#555"/></svg>
<div class="t lb" style="transform:scaleX(1.080);transform-origin:0 0;left:360px;top:556.7px">Quantity<span style="color:#a44b43">*</span></div>
<div class="t lb" style="transform:scaleX(1.010);transform-origin:0 0;left:708.6px;top:556.7px">Price<span style="color:#a44b43">*</span></div>
<div class="t lb" style="transform:scaleX(1.092);transform-origin:0 0;left:1057px;top:556.7px">Good till</div>
<div class="t lb" style="transform:scaleX(1.021);transform-origin:0 0;left:1405.5px;top:556.7px">Expiry date</div>
<div class="a" style="left:360px;top:580px;width:338.5px;height:34px;background:#fff;border:1px solid #dcdcdc;border-radius:4px;"></div>
<div class="t" style="left:372px;top:590.1px;font-size:14px;color:#6b6b6b;">0</div>
<svg class="a" style="left:678px;top:586px" width="14" height="22" viewBox="0 0 14 22"><path d="M7 2V11M2.5 6.5H11.5M2.5 17.5H11.5" stroke="#555" stroke-width="1.6"/></svg>
<div class="a" style="left:708.6px;top:580px;width:338.5px;height:34px;background:#fff;border:1px solid #dcdcdc;border-radius:4px;"></div>
<div class="a" style="left:733px;top:581px;width:313px;height:32px;background:#ececec;border-radius:0 4px 4px 0"></div>
<div class="a" style="left:716px;top:596px;width:11px;height:1.6px;background:#777"></div>
<div class="t" style="transform:scaleX(1.020);transform-origin:0 0;left:745px;top:590.1px;font-size:14px;color:#6b6b6b;">0.00</div>
<svg class="a" style="left:1027px;top:591px" width="12" height="12" viewBox="0 0 12 12"><path d="M6 0.5V11.5M0.5 6H11.5" stroke="#777" stroke-width="1.5"/></svg>
<div class="a" style="left:1057px;top:580px;width:338.5px;height:35px;background:#ececec;border:1px solid #dedede;border-radius:4px;"></div>
<svg class="a" style="left:1375px;top:594px" width="10" height="6" viewBox="0 0 10 6"><path d="M0 0.5H10L5 5.5Z" fill="#555"/></svg>
<div class="a" style="left:1405.5px;top:580px;width:338.5px;height:35px;background:#ececec;border:1px solid #dedede;border-radius:4px;"></div>
<svg class="a" style="left:1725px;top:591px" width="11" height="13" viewBox="0 0 11 13"><rect x="0.5" y="2" width="10" height="10.5" fill="#999"/><rect x="2" y="0" width="1.5" height="3" fill="#999"/><rect x="7.5" y="0" width="1.5" height="3" fill="#999"/><rect x="0.5" y="4" width="10" height="0.8" fill="#ececec"/></svg>
<div class="a" style="left:360px;top:675px;width:1384px;height:2px;background:#dedede"></div>
<div class="a" style="left:360px;top:634px;width:83px;height:43px;background:#fff;border:1.5px solid #dedede;border-bottom:none;border-radius:4px 4px 0 0"></div>
<div class="t" id="det" style="transform:scaleX(1.026);transform-origin:0 0;left:377.5px;top:649.9px;font-size:15.5px;color:#4a56a8;">Details</div>
<div class="a" style="left:360px;top:688px;width:1384px;height:66px;background:#f2f2f2;border-radius:3px"></div>
<div class="a" style="left:820px;top:695px;width:1px;height:52px;background:#e3e3e3"></div>
<div class="a" style="left:1281px;top:695px;width:1px;height:52px;background:#e3e3e3"></div>
<div class="t" id="inf0" style="transform:scaleX(1.026);transform-origin:0 0;left:374.8px;top:701.8px;font-size:15px;color:#555;">Avalibale shares</div>
<div class="t" style="left:374.8px;top:724.3px;font-size:15px;color:#aaa;">0</div>
<div class="t" id="inf1" style="transform:scaleX(1.039);transform-origin:0 0;left:566.9px;top:701.8px;font-size:15px;color:#555;">Purchase power</div>
<div class="t" style="left:566.9px;top:724.3px;font-size:15px;color:#5c6bc0;">0</div>
<div class="t" id="inf2" style="transform:scaleX(1.077);transform-origin:0 0;left:836.2px;top:701.8px;font-size:15px;color:#555;">Best bid</div>
<div class="t" style="left:836.2px;top:724.3px;font-size:15px;color:#aaa;">0 ( 0 )</div>
<div class="t" id="inf3" style="transform:scaleX(1.073);transform-origin:0 0;left:1027.8px;top:701.8px;font-size:15px;color:#555;">Best offer</div>
<div class="t" style="left:1027.8px;top:724.3px;font-size:15px;color:#5c6bc0;">0 (0)</div>
<div class="t" id="inf4" style="transform:scaleX(1.030);transform-origin:0 0;left:1297.4px;top:701.8px;font-size:15px;color:#555;">Last</div>
<div class="t" style="left:1297.4px;top:724.3px;font-size:15px;color:#5c6bc0;">0</div>
<div class="t" id="inf5" style="transform:scaleX(1.070);transform-origin:0 0;left:1451.1px;top:701.8px;font-size:15px;color:#555;">T.High</div>
<div class="t" style="left:1451.1px;top:724.3px;font-size:15px;color:#5c6bc0;">0</div>
<div class="t" id="inf6" style="transform:scaleX(1.049);transform-origin:0 0;left:1604.9px;top:701.8px;font-size:15px;color:#555;">T.Low</div>
<div class="t" style="left:1604.9px;top:724.3px;font-size:15px;color:#5c6bc0;">0</div>
<div class="a" style="left:1311px;top:731px;width:15px;height:3.5px;background:#5c6bc0"></div>
<div class="t lb" style="transform:scaleX(1.004);transform-origin:0 0;left:360px;top:767.7px">Cash account</div>
<div class="t lb" style="transform:scaleX(1.049);transform-origin:0 0;left:708.6px;top:767.7px">Fill term</div>
<div class="t lb" style="transform:scaleX(1.084);transform-origin:0 0;left:1057px;top:767.7px">Min.Qty<span style="color:#a44b43">*</span></div>
<div class="t lb" style="transform:scaleX(1.014);transform-origin:0 0;left:1405.5px;top:767.7px">Disc. volume</div>
<div class="a" style="left:360px;top:792px;width:338.5px;height:35px;background:#ececec;border:1px solid #dedede;border-radius:4px;"></div>
<svg class="a" style="left:678px;top:806px" width="10" height="6" viewBox="0 0 10 6"><path d="M0 0.5H10L5 5.5Z" fill="#555"/></svg>
<div class="a" style="left:708.6px;top:792px;width:338.5px;height:35px;background:#ececec;border:1px solid #dedede;border-radius:4px;"></div>
<svg class="a" style="left:1026px;top:806px" width="10" height="6" viewBox="0 0 10 6"><path d="M0 0.5H10L5 5.5Z" fill="#555"/></svg>
<div class="a" style="left:1057px;top:792px;width:338.5px;height:35px;background:#ececec;border:1px solid #dedede;border-radius:4px;"></div>
<div class="t" style="left:1070px;top:802.1px;font-size:14px;color:#6b6b6b;">0</div>
<svg class="a" style="left:1375px;top:797px" width="14" height="22" viewBox="0 0 14 22"><path d="M7 2V11M2.5 6.5H11.5M2.5 17.5H11.5" stroke="#555" stroke-width="1.6"/></svg>
<div class="a" style="left:1405.5px;top:792px;width:338.5px;height:35px;background:#ececec;border:1px solid #dedede;border-radius:4px;"></div>
<div class="t" style="left:1418px;top:802.1px;font-size:14px;color:#6b6b6b;">0</div>
<div class="t lb" style="transform:scaleX(1.045);transform-origin:0 0;left:360px;top:841.7px">Trigger price</div>
<div class="t lb" style="transform:scaleX(1.048);transform-origin:0 0;left:708.6px;top:841.7px">Trigger price type</div>
<div class="t lb" style="transform:scaleX(1.049);transform-origin:0 0;left:1057px;top:841.7px">Trigger price direction</div>
<div class="a" style="left:360px;top:866px;width:338.5px;height:34px;background:#fff;border:1px solid #e3e3e3;border-radius:4px;"></div>
<div class="a" style="left:385px;top:867px;width:313px;height:32px;background:#ececec;border-radius:0 4px 4px 0"></div>
<svg class="a" style="left:367px;top:877px" width="12" height="12" viewBox="0 0 12 12"><path d="M6 0.5V11.5M0.5 6H11.5" stroke="#999" stroke-width="1.5"/></svg>
<div class="a" style="left:680px;top:882px;width:11px;height:1.6px;background:#aaa"></div>
<div class="a" style="left:708.6px;top:866px;width:338.5px;height:34px;background:#ececec;border:1px solid #dedede;border-radius:4px;"></div>
<svg class="a" style="left:1026px;top:880px" width="10" height="6" viewBox="0 0 10 6"><path d="M0 0.5H10L5 5.5Z" fill="#555"/></svg>
<div class="a" style="left:1057px;top:866px;width:338.5px;height:34px;background:#ececec;border:1px solid #dedede;border-radius:4px;"></div>
<svg class="a" style="left:1375px;top:880px" width="10" height="6" viewBox="0 0 10 6"><path d="M0 0.5H10L5 5.5Z" fill="#555"/></svg>
<div class="a" style="left:360px;top:929px;width:1384px;height:57px;background:#f5f5f5"></div>
<div class="t" style="transform:scaleX(1.038);transform-origin:0 0;left:365px;top:938.3px;font-size:15px;color:#5c6bc0;">Trade</div>
<div class="t" style="transform:scaleX(1.095);transform-origin:0 0;left:365px;top:961.3px;font-size:15px;color:#5c6bc0;">amount</div>
<div class="a" style="left:452.7px;top:939px;width:21px;height:37px;background:#e6e6e6;border-radius:3px"></div>
<div class="a" style="left:525.5px;top:939px;width:20.5px;height:37px;background:#e6e6e6;border-radius:3px"></div>
<div class="a" style="left:593.2px;top:939px;width:20.5px;height:37px;background:#e6e6e6;border-radius:3px"></div>
<div class="t" style="left:458px;top:951.3px;font-size:15px;color:#5c6bc0;">0</div>
<div class="t" style="left:531px;top:951.3px;font-size:15px;color:#5c6bc0;">0</div>
<div class="t" style="left:598.5px;top:951.3px;font-size:15px;color:#5c6bc0;">0</div>
<div class="t" style="transform:scaleX(0.995);transform-origin:0 0;left:483.4px;top:950.3px;font-size:15px;color:#5c6bc0;">Fees</div>
<div class="t" style="transform:scaleX(1.028);transform-origin:0 0;left:556px;top:950.3px;font-size:15px;color:#5c6bc0;">VAT</div>
<div class="t" style="transform:scaleX(1.106);transform-origin:0 0;left:629px;top:938.3px;font-size:15px;color:#5c6bc0;">Order</div>
<div class="t" style="transform:scaleX(1.081);transform-origin:0 0;left:629px;top:961.3px;font-size:15px;color:#5c6bc0;">amount</div>
<div class="a" style="left:707.7px;top:941px;width:155px;height:34px;background:#efefef;border:1px solid #e0e0e0;border-radius:3px;"></div>
<div class="a" style="left:893px;top:941px;width:176px;height:33px;background:#0f2157;border-radius:2px"></div>
<svg class="a" style="left:902px;top:950px" width="13" height="15" viewBox="0 0 13 15"><rect x="0" y="0" width="13" height="15" rx="1" fill="#fff"/><rect x="2" y="2" width="9" height="3" fill="#0f2157"/><rect x="2" y="7" width="2.2" height="2" fill="#0f2157"/><rect x="5.4" y="7" width="2.2" height="2" fill="#0f2157"/><rect x="8.8" y="7" width="2.2" height="2" fill="#0f2157"/><rect x="2" y="10.5" width="2.2" height="2" fill="#0f2157"/><rect x="5.4" y="10.5" width="2.2" height="2" fill="#0f2157"/><rect x="8.8" y="10.5" width="2.2" height="2" fill="#0f2157"/></svg>
<div class="t" id="calc" style="left:919px;top:950.4px;font-size:15.5px;color:#fff;">CALCULATE TOTAL</div>
<div class="a" style="left:1477.4px;top:940.5px;width:129px;height:34px;background:#fff;border:1px solid #e3e3e3;border-radius:2px;"></div>
<div class="t" id="clear" style="transform:scaleX(0.952);transform-origin:0 0;left:1517.6px;top:949.9px;font-size:15.5px;color:#444;">CLEAR</div>
<div class="a" style="left:1616.5px;top:940.5px;width:122.5px;height:34px;background:#c8633d;border-radius:2px"></div>
<div class="t" id="place" style="transform:scaleX(0.960);transform-origin:0 0;left:1625px;top:949.9px;font-size:15.5px;color:#fff;">PLACE ORDER</div>
</div>
</div>
</div>

<!-- meet tiles -->
<div class="a" style="left:-76px;top:1079px;width:494px;height:348px;border-radius:16px;background:#739ef1"></div>
<div class="a" style="left:-68px;top:1087px;width:478px;height:332px;border-radius:8px;background:#3c4043;overflow:hidden">
  <div class="a" style="left:100px;top:28px;width:276px;height:276px;border-radius:50%;border:2px solid #434649"></div>
</div>
<div class="a" style="left:77px;top:1160px;width:186px;height:186px;border-radius:50%;background:#5a5b60"></div>
<div class="a" style="left:96px;top:1179px;width:148px;height:148px;border-radius:50%;background:#7b8e9b"></div>
<div class="t av" style="left:144.5px;top:1209.5px">T</div>
<div class="a" style="left:342px;top:1103px;width:52px;height:52px;border-radius:26px;background:#3569d4"></div>
<div class="a" style="left:352px;top:1125px;width:8px;height:8px;border-radius:4px;background:#fff"></div>
<div class="a" style="left:364px;top:1125px;width:8px;height:8px;border-radius:4px;background:#fff"></div>
<div class="a" style="left:376px;top:1125px;width:8px;height:8px;border-radius:4px;background:#fff"></div>
<div class="t nm" id="n1" style="transform:scaleX(1.05);transform-origin:0 0;left:-46px;top:1371px">Talal Al-Harbi</div>

<div class="a" style="left:442px;top:1079px;width:494px;height:348px;border-radius:14px;background:#3c4043"></div>
<div class="a" style="left:615px;top:1179px;width:148px;height:148px;border-radius:50%;background:#b24321"></div>
<div class="t av" style="left:654px;top:1209.5px">M</div>
<div class="a" style="left:860px;top:1103px;width:52px;height:52px;border-radius:26px;background:#36383c"></div>
<svg class="a" style="left:867.8px;top:1111.25px" width="36" height="36" viewBox="0 0 24 24"><path d="M19 11h-1.7c0 .74-.16 1.43-.43 2.05l1.23 1.23c.56-.98.9-2.09.9-3.28zm-4.02.17c0-.06.02-.11.02-.17V5c0-1.66-1.34-3-3-3S9 3.34 9 5v.18l5.98 5.99zM4.27 3L3 4.27l6.01 6.01V11c0 1.66 1.33 3 2.99 3 .22 0 .44-.03.65-.08l1.66 1.66c-.71.33-1.5.52-2.31.52-2.76 0-5.3-2.1-5.3-5.1H5c0 3.410 2.72 6.23 6 6.72V21h2v-3.28c.91-.13 1.77-.45 2.54-.9L19.73 21 21 19.73 4.27 3z" fill="#fff"/></svg>

<div class="t nm" id="n2" style="transform:scaleX(1.039);transform-origin:0 0;left:471.5px;top:1371px">Mohammed AlOmran</div>

<div class="a" style="left:960px;top:1079px;width:496px;height:348px;border-radius:14px;background:#3c4043"></div>
<div class="a" style="left:1134px;top:1179px;width:148px;height:148px;border-radius:50%;background:#3e887c"></div>
<div class="t av" style="left:1173px;top:1209.5px">M</div>
<div class="a" style="left:1379px;top:1103px;width:52px;height:52px;border-radius:26px;background:#36383c"></div>
<svg class="a" style="left:1386.8px;top:1111.25px" width="36" height="36" viewBox="0 0 24 24"><path d="M19 11h-1.7c0 .74-.16 1.43-.43 2.05l1.23 1.23c.56-.98.9-2.09.9-3.28zm-4.02.17c0-.06.02-.11.02-.17V5c0-1.66-1.34-3-3-3S9 3.34 9 5v.18l5.98 5.99zM4.27 3L3 4.27l6.01 6.01V11c0 1.66 1.33 3 2.99 3 .22 0 .44-.03.65-.08l1.66 1.66c-.71.33-1.5.52-2.31.52-2.76 0-5.3-2.1-5.3-5.1H5c0 3.410 2.72 6.23 6 6.72V21h2v-3.28c.91-.13 1.77-.45 2.54-.9L19.73 21 21 19.73 4.27 3z" fill="#fff"/></svg>

<div class="t nm" id="n3" style="transform:scaleX(1.026);transform-origin:0 0;left:989px;top:1371px">Mahmoud Gouda</div>

<div class="a" style="left:1480px;top:1079px;width:496px;height:348px;border-radius:14px;background:#3c4043"></div>
<div class="a" style="left:1653px;top:1179px;width:148px;height:148px;border-radius:50%;background:#7b8e9b"></div>
<div class="t av" style="left:1709.5px;top:1209.5px">J</div>
<div class="a" style="left:1898px;top:1103px;width:52px;height:52px;border-radius:26px;background:#36383c"></div>
<svg class="a" style="left:1905.8px;top:1111.25px" width="36" height="36" viewBox="0 0 24 24"><path d="M19 11h-1.7c0 .74-.16 1.43-.43 2.05l1.23 1.23c.56-.98.9-2.09.9-3.28zm-4.02.17c0-.06.02-.11.02-.17V5c0-1.66-1.34-3-3-3S9 3.34 9 5v.18l5.98 5.99zM4.27 3L3 4.27l6.01 6.01V11c0 1.66 1.33 3 2.99 3 .22 0 .44-.03.65-.08l1.66 1.66c-.71.33-1.5.52-2.31.52-2.76 0-5.3-2.1-5.3-5.1H5c0 3.410 2.72 6.23 6 6.72V21h2v-3.28c.91-.13 1.77-.45 2.54-.9L19.73 21 21 19.73 4.27 3z" fill="#fff"/></svg>

<div class="t nm" id="n4" style="transform:scaleX(1.010);transform-origin:0 0;left:1512px;top:1371px">Javeed Khan</div>

<!-- gemini-like floating button -->
<div class="a" style="left:1942px;top:177px;width:64px;height:64px;border-radius:32px;background:#f1f1f1"></div>
<svg class="a" style="left:1946px;top:184px" width="50" height="50" viewBox="-25 -25 50 50"><path d="M-17.5 0 Q-2.625 -2.625 0 -17.5 Q2.625 -2.625 17.5 0 Q2.625 2.625 0 17.5 Q-2.625 2.625 -17.5 0Z" fill="#6a1bd6"/></svg>
</body></html>
